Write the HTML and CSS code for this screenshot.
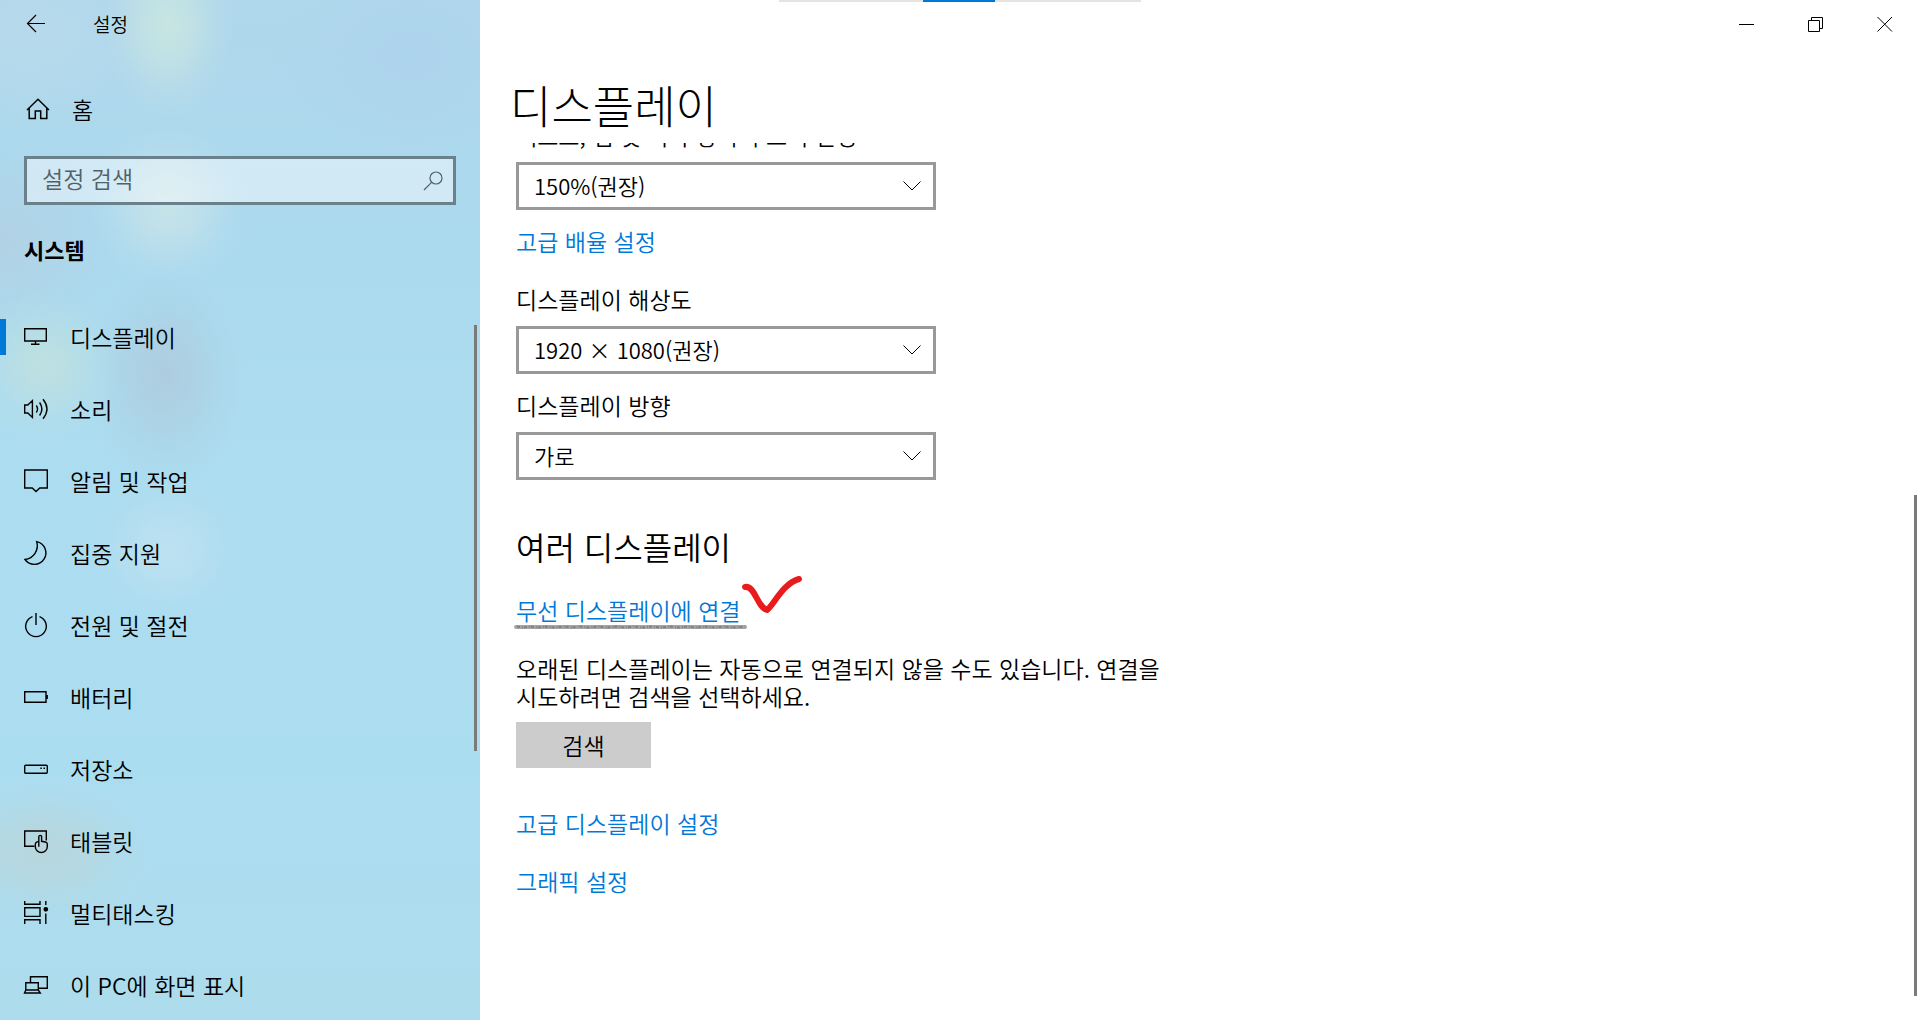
FILE: index.html
```html
<!DOCTYPE html>
<html lang="ko">
<head>
<meta charset="utf-8">
<meta name="viewport" content="width=device-width, initial-scale=1">
<title>설정</title>
<link rel="stylesheet" href="styles.css">
</head>
<body>
<div class="window">
  <aside class="sidebar">
    <header class="sidebar-bar">
      <button class="back" type="button" aria-label="뒤로">
        <svg class="icon" viewBox="0 0 24 24"><path d="M21 11.5H3.5M12 3 3.5 11.5 12 20"/></svg>
      </button>
      <span class="app-name">설정</span>
    </header>
    <a class="home" href="#home">
      <svg class="icon" viewBox="0 0 24 24"><path d="M1 12 12 1.2 23 12M3.2 10V20.6H9.3V13H14.7V20.6H20.8V10"/></svg>
      <span>홈</span>
    </a>
    <form class="search" role="search">
      <input class="search-input" type="search" placeholder="설정 검색" aria-label="설정 검색">
      <svg class="search-icon" viewBox="0 0 20 20"><circle cx="13" cy="7" r="6"/><path d="M8.8 11.2 1 19"/></svg>
    </form>
    <h2 class="category">시스템</h2>
    <nav class="nav">
      <a class="nav-item current" href="#display" aria-current="page">
        <svg class="icon" viewBox="0 0 24 24"><path d="M.7 2.7H22.3V15H.7ZM11.5 15V18.3M7 18.3H15.5"/></svg>
        <span>디스플레이</span>
      </a>
      <a class="nav-item" href="#sound">
        <svg class="icon" viewBox="0 0 24 24"><path d="M.7 7H3.8L8.4 2.6V19.4L3.8 15H.7ZM12.3 7.5Q14.8 11 12.3 14.5M15.6 4.5Q20.2 11 15.6 17.5M19 1.3Q27 11 19 20.7"/></svg>
        <span>소리</span>
      </a>
      <a class="nav-item" href="#notifications">
        <svg class="icon" viewBox="0 0 24 24"><path d="M.7 0H23.3V18H15.8L12 21.6 8.2 18H.7Z"/></svg>
        <span>알림 및 작업</span>
      </a>
      <a class="nav-item" href="#focus">
        <svg class="icon" viewBox="0 0 24 24"><path d="M12.7-.4A11.5 11.5 0 1 1 1 17.5 14 14 0 0 0 12.7-.4Z"/></svg>
        <span>집중 지원</span>
      </a>
      <a class="nav-item" href="#power">
        <svg class="icon" viewBox="0 0 24 24"><path d="M12-1V11M8.5 2.6A10.3 10.3 0 1 0 15.5 2.6"/></svg>
        <span>전원 및 절전</span>
      </a>
      <a class="nav-item" href="#battery">
        <svg class="icon" viewBox="0 0 24 24"><path d="M.7 5.7H22V16.3H.7ZM23.2 9V13"/></svg>
        <span>배터리</span>
      </a>
      <a class="nav-item" href="#storage">
        <svg class="icon" viewBox="0 0 24 24"><rect x=".7" y="7.2" width="22.6" height="8" rx="1"/><path d="M16.3 10.3H17.8M19.5 10.3H21"/></svg>
        <span>저장소</span>
      </a>
      <a class="nav-item" href="#tablet">
        <svg class="icon" viewBox="0 0 24 24"><path d="M10.5 16.3H.7V1H22.3V10.5"/><path d="M14.8 16.8V7Q14.8 5.4 16.2 5.4T17.6 7V11.3L21.5 12Q23.3 12.4 23.3 14.2V16.5A6 6 0 0 1 11.3 16.5V14.5Q11.3 12.5 13 11.8L14.8 11.3"/></svg>
        <span>태블릿</span>
      </a>
      <a class="nav-item" href="#multitasking">
        <svg class="icon" viewBox="0 0 24 24"><path d="M.7-1V2.2H16V-1M.7 5.7H16V14.4H.7ZM.7 22V17.8H16V22M21.8-1V3M21.8 11.5V22"/><circle class="solid" cx="21.8" cy="7.3" r="1.7"/></svg>
        <span>멀티태스킹</span>
      </a>
      <a class="nav-item" href="#projecting">
        <svg class="icon" viewBox="0 0 24 24"><path d="M6.5 8V2.7H23.3V14.3H15M1.8 16V8.7H14.3V16M1.8 16H14.3L16.3 19H.5Z"/></svg>
        <span>이 PC에 화면 표시</span>
      </a>
    </nav>
    <div class="scroll-thumb sidebar-thumb"></div>
  </aside>

  <main class="main">
    <div class="loading"><div class="loading-value"></div></div>
    <header class="caption">
      <button class="caption-button" type="button" aria-label="최소화"><svg viewBox="0 0 16 16"><path d="M0 8.5H15"/></svg></button>
      <button class="caption-button" type="button" aria-label="이전 크기로 복원"><svg viewBox="0 0 16 16"><path d="M.5 4.5H11.5V15.5H.5ZM3.5 4V1.5H14.5V12.5H12"/></svg></button>
      <button class="caption-button" type="button" aria-label="닫기"><svg viewBox="0 0 16 16"><path d="M.5 1 15 15.5M15 1 .5 15.5"/></svg></button>
    </header>
    <h1 class="page-title">디스플레이</h1>
    <div class="scroll-area">
      <div class="settings">
        <div class="field">
          <label for="scale">텍스트, 앱 및 기타 항목의 크기 변경</label>
          <div class="select-box">
            <select id="scale"><option>150%(권장)</option></select>
            <svg class="chevron" viewBox="0 0 18 10"><path d="M.5.5 9 9 17.5.5"/></svg>
          </div>
        </div>
        <a class="link scale-link" href="#advanced-scale">고급 배율 설정</a>
        <div class="field resolution">
          <label for="resolution">디스플레이 해상도</label>
          <div class="select-box">
            <select id="resolution"><option>1920 × 1080(권장)</option></select>
            <svg class="chevron" viewBox="0 0 18 10"><path d="M.5.5 9 9 17.5.5"/></svg>
          </div>
        </div>
        <div class="field orientation">
          <label for="orientation">디스플레이 방향</label>
          <div class="select-box">
            <select id="orientation"><option>가로</option></select>
            <svg class="chevron" viewBox="0 0 18 10"><path d="M.5.5 9 9 17.5.5"/></svg>
          </div>
        </div>
        <h2 class="section-title">여러 디스플레이</h2>
        <div class="marked">
          <a class="link" href="#wireless">무선 디스플레이에 연결</a>
          <svg class="underline" viewBox="0 0 234 6" preserveAspectRatio="none"><path class="underline-base" d="M2 3H231"/><path class="underline-grain" d="M3 2.5 9 3.5 16 2.5 24 3.5 32 2.5 40 3.5 49 2.5 58 3.5 66 2.5 75 3.5 84 2.5 93 3.5 102 2.5 111 3.5 120 2.5 129 3.5 138 2.5 147 3.5 156 2.5 165 3.5 174 2.5 183 3.5 192 2.5 201 3.5 210 2.5 219 3.5 231 2.5"/></svg>
          <svg class="check" viewBox="0 0 60 38"><path d="M3 11C13 9 15 31 25 34C32 29 40 8 57 3"/></svg>
        </div>
        <p class="hint">오래된 디스플레이는 자동으로 연결되지 않을 수도 있습니다. 연결을 시도하려면 검색을 선택하세요.</p>
        <button class="detect" type="button">검색</button>
        <a class="link advanced" href="#advanced-display">고급 디스플레이 설정</a>
        <a class="link graphics" href="#graphics">그래픽 설정</a>
      </div>
    </div>
    <div class="scroll-thumb main-thumb"></div>
  </main>
</div>
</body>
</html>
```
FILE: styles.css
```css
* {
  box-sizing: border-box;
}

body {
  margin: 0;
  font-family: "Noto Sans CJK KR", sans-serif;
  font-size: 23px;
  font-weight: 350;
  line-height: 28px;
  color: #000;
  background: #fff;
}

h1, h2, p {
  margin: 0;
}

a {
  color: inherit;
  text-decoration: none;
}

button, input, select {
  font: inherit;
  color: inherit;
  border: 0;
  border-radius: 0;
  padding: 0;
  background: none;
}

svg {
  display: block;
  fill: none;
  stroke: currentColor;
  overflow: visible;
}

.window {
  display: flex;
  height: 100vh;
  overflow: hidden;
}

/* Sidebar */
.sidebar {
  position: relative;
  display: flex;
  flex-direction: column;
  flex: 0 0 480px;
  overflow: hidden;
  background:
    radial-gradient(ellipse 65px 95px at 168px 25px, #c8e5e2 0%, #c8e5e2b0 35%, #c8e5e230 75%, #c8e5e200 100%),
    radial-gradient(ellipse 80px 80px at 168px 205px, #c8e3e9 0%, #c8e3e9b0 35%, #c8e3e930 75%, #c8e3e900 100%),
    radial-gradient(ellipse 75px 75px at 45px 365px, #bee0e1 0%, #bee0e1b0 35%, #bee0e130 75%, #bee0e100 100%),
    radial-gradient(ellipse 80px 110px at 165px 375px, #adcddf 0%, #adcddfb0 35%, #adcddf30 75%, #adcddf00 100%),
    radial-gradient(ellipse 80px 75px at 168px 550px, #bde1f1 0%, #bde1f1b0 35%, #bde1f130 75%, #bde1f100 100%),
    radial-gradient(ellipse 110px 75px at 45px 850px, #b8d6dc 0%, #b8d6dcb0 35%, #b8d6dc30 75%, #b8d6dc00 100%),
    radial-gradient(ellipse 120px 100px at 0 245px, #b2d2e5 0%, #b2d2e500 100%),
    radial-gradient(ellipse 130px 100px at 30px 30px, #b7daeb 0%, #b7daeb00 100%),
    radial-gradient(ellipse 140px 100px at 410px 55px, #add4ed 0%, #add4ed00 100%),
    linear-gradient(#b0d7eb 0%, #abd9ee 22%, #acdcef 40%, #abddf1 75%, #addcec 100%);
}

.icon {
  flex: none;
  width: 24px;
  height: 24px;
  stroke-width: 1.4;
}

.solid {
  fill: currentColor;
}

.sidebar-bar {
  display: flex;
  align-items: center;
  gap: 22px;
  height: 48px;
}

.back {
  display: flex;
  align-items: center;
  justify-content: center;
  width: 71px;
  height: 48px;
}

.back .icon {
  stroke-width: 1.2;
}

.app-name {
  font-size: 19px;
}

.home {
  display: flex;
  align-items: center;
  gap: 22px;
  height: 72px;
  margin-top: 26px;
  padding-left: 26px;
}

.home .icon {
  stroke-width: 1.5;
}

.home span,
.nav-item span {
  padding-bottom: 2px;
}

.search {
  display: flex;
  align-items: center;
  height: 49px;
  margin: 10px 24px 0;
  padding: 0 10px 0 15px;
  border: 3px solid #6a818c;
  background: #ffffff70;
}

.search-input {
  flex: 1;
  min-width: 0;
  height: 43px;
  padding-bottom: 6px;
  outline: 0;
  appearance: none;
}

.search-input::placeholder {
  color: #526168;
  opacity: 1;
}

.search-icon {
  width: 20px;
  height: 20px;
  color: #526168;
  stroke-width: 1.2;
}

.category {
  margin: 30px 24px 39px;
  font-size: 22px;
  font-weight: 700;
}

.nav {
  flex: 1;
  overflow: hidden;
}

.nav-item {
  position: relative;
  display: flex;
  align-items: center;
  gap: 22px;
  height: 72px;
  padding-left: 24px;
}

.current::before {
  content: "";
  position: absolute;
  left: 0;
  top: 17px;
  width: 6px;
  height: 36px;
  background: #0078d7;
}

.scroll-thumb {
  position: absolute;
  right: 3px;
  width: 3px;
  background: #7a7a7a;
}

.sidebar-thumb {
  top: 325px;
  height: 426px;
}

.main-thumb {
  top: 495px;
  bottom: 24px;
}

/* Main pane */
.main {
  position: relative;
  display: flex;
  flex-direction: column;
  flex: 1;
  min-width: 0;
}

.loading {
  position: absolute;
  top: 0;
  left: 299px;
  width: 362px;
  height: 2px;
  background: #e4e4e4;
}

.loading-value {
  width: 72px;
  height: 2px;
  margin-left: 144px;
  background: #0078d7;
}

.caption {
  display: flex;
  justify-content: flex-end;
  height: 48px;
  padding-right: 1px;
}

.caption-button {
  display: flex;
  align-items: center;
  justify-content: center;
  width: 69px;
  height: 48px;
}

.caption-button svg {
  width: 16px;
  height: 16px;
}

.page-title {
  margin: 27px 30px 8px;
  font-size: 45px;
  font-weight: 300;
  line-height: 60px;
}

.scroll-area {
  flex: 1;
  overflow: hidden;
  padding-left: 36px;
}

.settings {
  display: flex;
  flex-direction: column;
  align-items: flex-start;
  width: 660px;
  margin-top: -22px;
}

.field {
  display: flex;
  flex-direction: column;
  gap: 13px;
  width: 420px;
}

.select-box {
  display: flex;
  align-items: center;
  height: 48px;
  border: 3px solid #999;
}

.select-box select {
  flex: 1;
  height: 42px;
  padding: 0 52px 2px 15px;
  font-size: 22px;
  appearance: none;
}

.chevron {
  width: 18px;
  height: 10px;
  margin: 0 12px 0 -30px;
  pointer-events: none;
}

.link {
  color: #0078d7;
}

.scale-link {
  margin-top: 17px;
}

.resolution {
  margin-top: 30px;
}

.orientation {
  margin-top: 17px;
}

.section-title {
  margin: 44px 0 28px;
  font-size: 32px;
  font-weight: 350;
  line-height: 44px;
}

.marked {
  position: relative;
}

.marked .link {
  display: block;
}

/* Pen marks drawn over the link */
.underline {
  position: absolute;
  left: -2px;
  top: 28px;
  width: 234px;
  height: 6px;
}

.underline-base {
  stroke: #a6a6a6;
  stroke-width: 4;
  stroke-linecap: round;
}

.underline-grain {
  stroke: #808080;
  stroke-width: 2;
  stroke-dasharray: 3 2 1 1;
}

.check {
  position: absolute;
  left: 226px;
  top: -20px;
  width: 60px;
  height: 38px;
  color: #e81c1c;
  stroke-width: 6;
  stroke-linecap: round;
  stroke-linejoin: round;
}

.hint {
  margin-top: 30px;
  word-break: keep-all;
}

.detect {
  width: 135px;
  height: 46px;
  margin-top: 12px;
  background: #ccc;
}

.advanced {
  margin-top: 41px;
}

.graphics {
  margin-top: 30px;
}
```
